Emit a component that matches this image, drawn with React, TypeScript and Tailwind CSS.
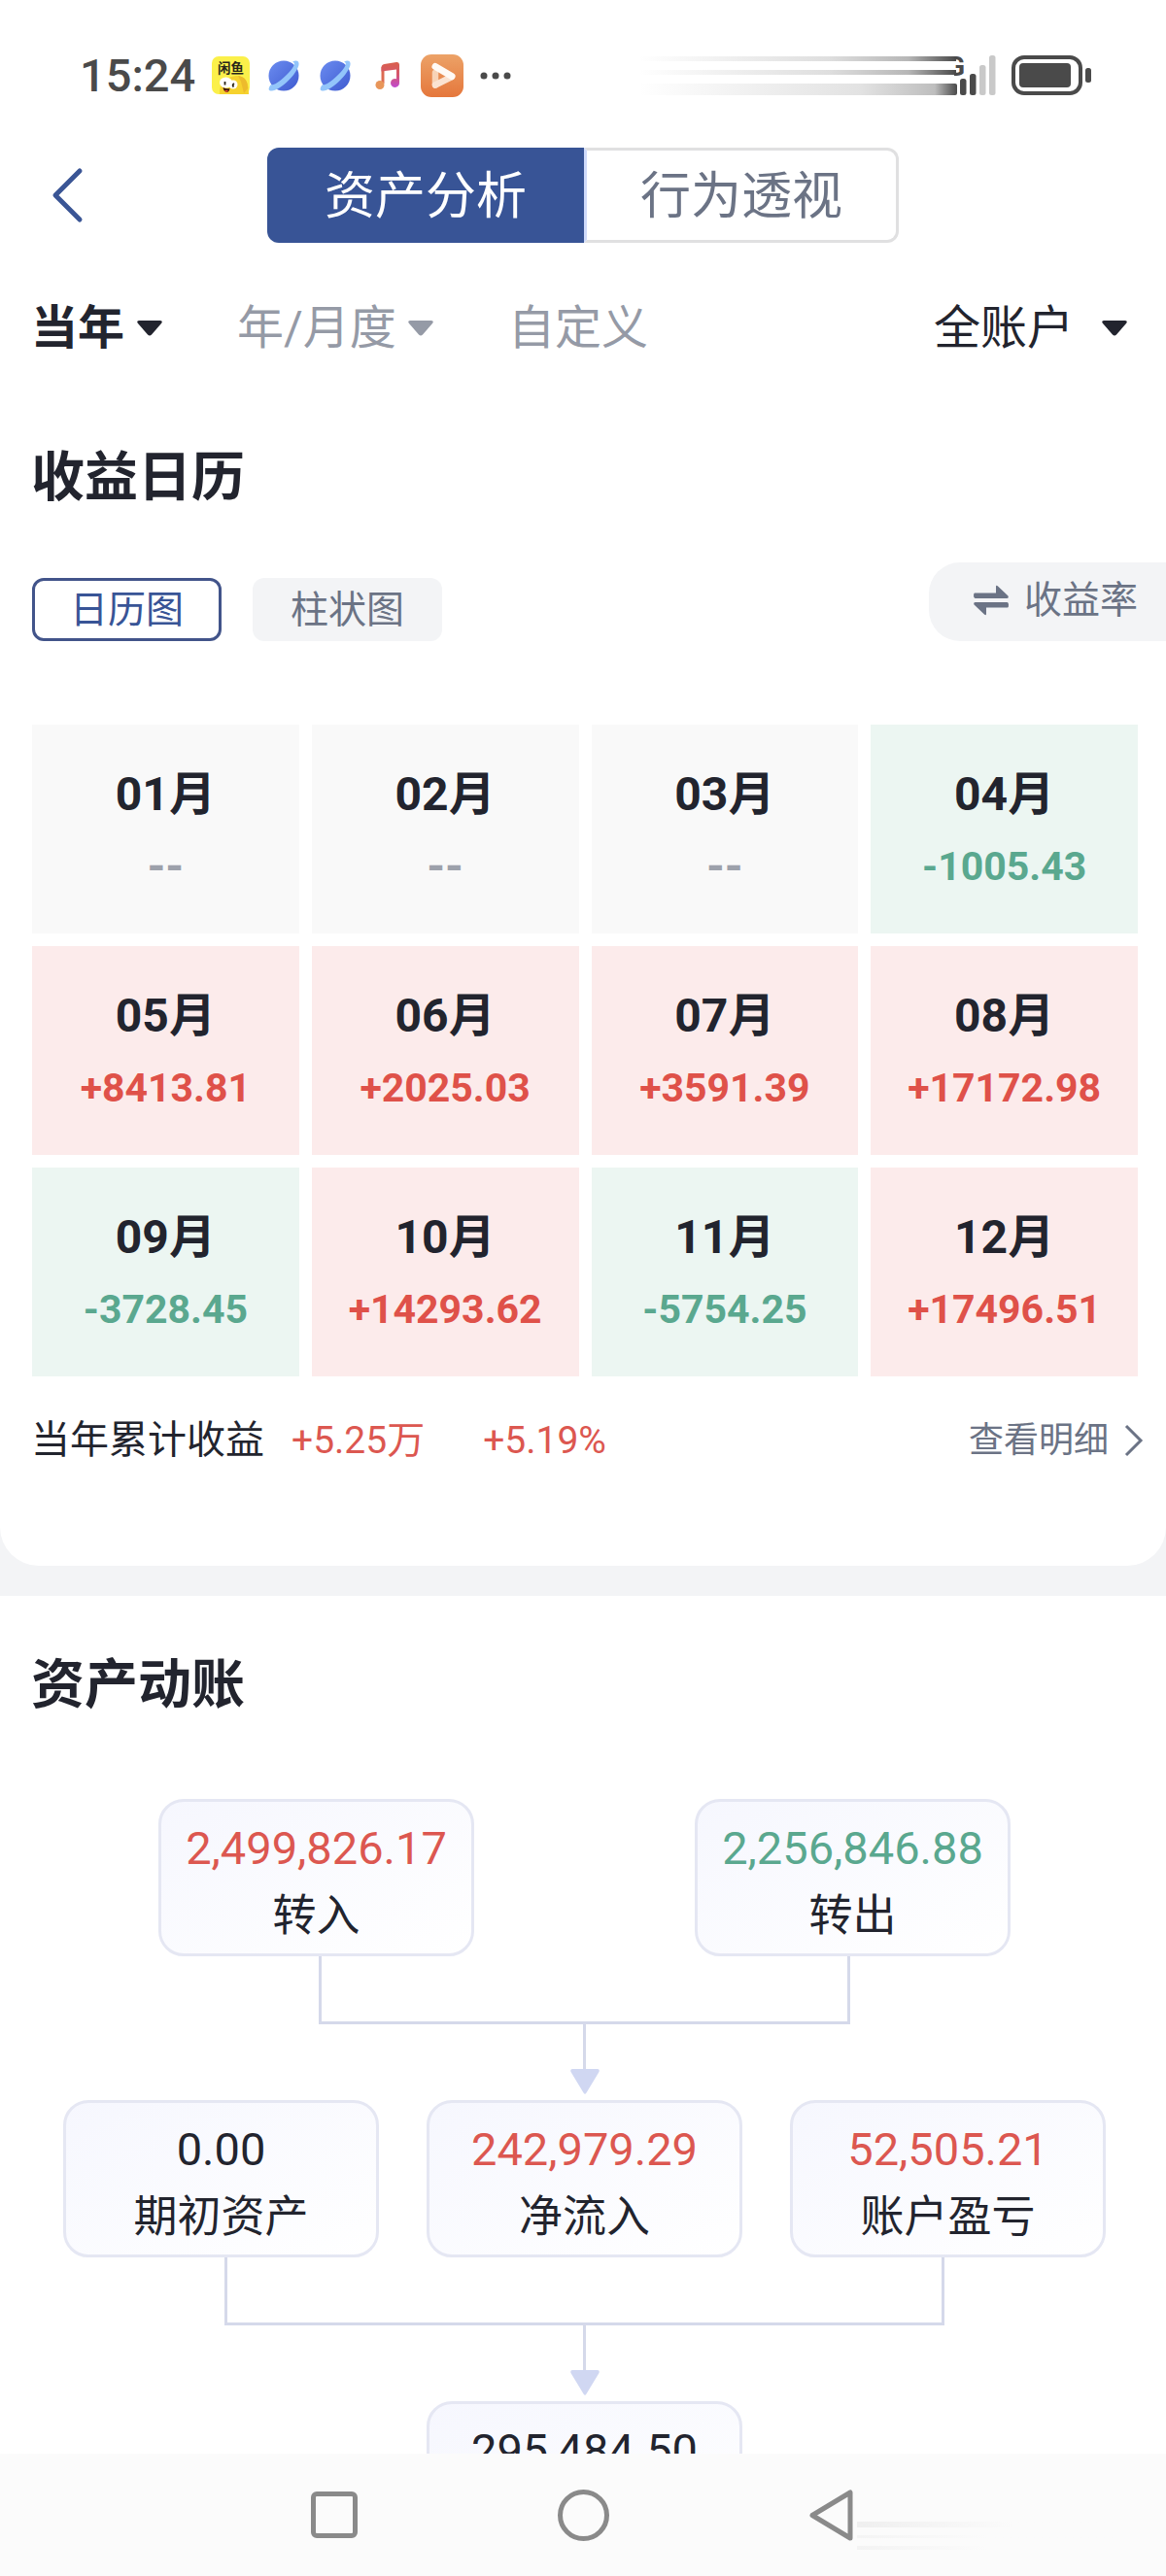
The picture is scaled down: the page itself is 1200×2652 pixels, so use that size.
import { useState } from 'react';
import clsx from 'clsx';

type Month = { label: string; value: string };

const MONTHS: Month[] = [
  { label: '01', value: '--' },
  { label: '02', value: '--' },
  { label: '03', value: '--' },
  { label: '04', value: '-1005.43' },
  { label: '05', value: '+8413.81' },
  { label: '06', value: '+2025.03' },
  { label: '07', value: '+3591.39' },
  { label: '08', value: '+17172.98' },
  { label: '09', value: '-3728.45' },
  { label: '10', value: '+14293.62' },
  { label: '11', value: '-5754.25' },
  { label: '12', value: '+17496.51' },
];

const VIEWS = ['日历图', '柱状图'];

const PlanetIcon = () => (
  <svg viewBox="0 0 36 36" className="size-9" aria-hidden="true">
    <defs>
      <linearGradient id="planet" x1="0" y1="0" x2="1" y2="1">
        <stop offset="0" stopColor="#6b8cf0" />
        <stop offset="1" stopColor="#3f5bd0" />
      </linearGradient>
    </defs>
    <circle cx="18" cy="18" r="15.5" fill="url(#planet)" />
    <path
      d="M5 27C1.500 31 2 34 6 33.500C12 32.500 20 26.500 26 19.500C32 12.500 35.500 5.500 32.500 3C31 2 29 2.500 27 3.800C29.500 4.200 29.500 6.500 27 10C23.500 15 17 21.500 11 25.200C8 27 5.800 27.800 5 27Z"
      fill="#93c5fa"
    />
  </svg>
);

const MusicIcon = () => (
  <svg viewBox="0 0 36 36" className="size-9" aria-hidden="true">
    <defs>
      <linearGradient id="note" x1="0" y1="0" x2="0" y2="1">
        <stop offset="0" stopColor="#d9604c" />
        <stop offset="0.5" stopColor="#d5566e" />
        <stop offset="1" stopColor="#c04ad0" />
      </linearGradient>
    </defs>
    <path d="M14 9V26" stroke="#dd6a52" strokeWidth="3" />
    <circle cx="11" cy="27.500" r="4.500" fill="#e8965a" />
    <path
      d="M12.500 9.500Q12.500 6.500 15.500 6L28 4Q31 3.600 31 6.500V25A4.500 4.500 0 1 1 28 21.200V11.500L12.500 13.500Z"
      fill="url(#note)"
    />
  </svg>
);

const XianyuIcon = () => (
  <svg viewBox="0 0 39 39" className="size-[39px]" aria-label="闲鱼">
    <rect width="39" height="39" rx="7" fill="#fbf04a" />
    <path d="M8 39C7 28 15 21 25 20C34 20 38 26 38 39Z" fill="#f6d22e" />
    <path d="M27 20Q37 21 37 33L33 38L30 26Z" fill="#edbb2c" />
    <ellipse cx="14.500" cy="27" rx="6.500" ry="5.500" fill="#fff" />
    <ellipse cx="22" cy="29" rx="4.500" ry="4.500" fill="#fff" />
    <path d="M13.500 26V29.500M23 28Q20.500 29.500 22.500 31.500" stroke="#2b2416" strokeWidth="1.800" fill="none" />
    <path d="M11.500 32Q15 34 18.500 33Q18 37 15 37Q12 36 11.500 32Z" fill="#3a1510" />
    <path d="M13 35.500Q15 34 17 35.500L15 37Z" fill="#e5492d" />
    <text x="6" y="17" fontSize="13.500" fontWeight="700" fill="#28261a">
      闲鱼
    </text>
  </svg>
);

const VideoIcon = () => (
  <svg viewBox="0 0 44 44" className="size-11" aria-hidden="true">
    <defs>
      <linearGradient id="video" x1="0" y1="0" x2="0" y2="1">
        <stop offset="0" stopColor="#eca267" />
        <stop offset="1" stopColor="#e5773c" />
      </linearGradient>
    </defs>
    <rect width="44" height="44" rx="11" fill="url(#video)" />
    <path d="M15 19V31.500" stroke="#f8d3b6" strokeWidth="6.500" strokeLinecap="round" />
    <path d="M15 31.500L32 23" stroke="#fbe3d1" strokeWidth="6.500" strokeLinecap="round" />
    <path d="M15 12.500L32 22.500" stroke="#fffaf5" strokeWidth="7" strokeLinecap="round" />
  </svg>
);

/* Signal and battery, with the network labels trailing off to the left */
const SystemIcons = () => (
  <svg viewBox="0 0 466 44" className="h-11 w-[466px]" aria-hidden="true">
    <defs>
      <linearGradient id="trail" x1="0" y1="0" x2="1" y2="0">
        <stop offset="0" stopColor="#4a4a4a" stopOpacity="0" />
        <stop offset="0.600" stopColor="#4a4a4a" stopOpacity="0.180" />
        <stop offset="0.850" stopColor="#4a4a4a" stopOpacity="0.400" />
        <stop offset="1" stopColor="#4a4a4a" />
      </linearGradient>
      <linearGradient id="trailWide" x1="0" y1="0" x2="1" y2="0">
        <stop offset="0" stopColor="#4a4a4a" stopOpacity="0" />
        <stop offset="0.700" stopColor="#4a4a4a" stopOpacity="0.160" />
        <stop offset="0.930" stopColor="#4a4a4a" stopOpacity="0.360" />
        <stop offset="1" stopColor="#4a4a4a" />
      </linearGradient>
      <clipPath id="halfG">
        <rect x="325" y="0" width="14" height="26" />
      </clipPath>
    </defs>
    <rect x="0" y="2" width="327" height="5" fill="url(#trail)" />
    <rect x="0" y="16" width="327" height="5" fill="url(#trail)" />
    <rect x="0" y="30" width="328" height="12" rx="2" fill="url(#trailWide)" />
    <text x="317" y="22" fontSize="28" fontWeight="700" fill="#4a4a4a" clipPath="url(#halfG)">
      G
    </text>
    <g fill="#4a4a4a">
      <rect x="331" y="25" width="6.500" height="17" rx="2.500" />
      <rect x="341" y="20" width="6.500" height="22" rx="2.500" />
    </g>
    <g fill="#c9c9c9">
      <rect x="351" y="11" width="6.500" height="31" rx="2.500" />
      <rect x="361" y="1" width="6.500" height="41" rx="2.500" />
    </g>
    <rect x="386" y="3" width="69" height="37" rx="11" fill="none" stroke="#4a4a4a" strokeWidth="4" />
    <rect x="392" y="9" width="53" height="25" rx="4" fill="#4a4a4a" />
    <rect x="460" y="14" width="6" height="15" rx="2.500" fill="#4a4a4a" />
  </svg>
);

const StatusBar = () => (
  <div className="flex h-[152px] shrink-0 items-center justify-between pt-[3px] pr-[77px] pl-[82px] text-[#4a4a4a]">
    <div className="flex items-center gap-[17px]">
      <span className="text-[47px] leading-[56px] font-medium">15:24</span>
      <XianyuIcon />
      <PlanetIcon />
      <PlanetIcon />
      <MusicIcon />
      <VideoIcon />
      <svg viewBox="0 0 32 8" className="h-2 w-8" fill="currentColor" aria-hidden="true">
        <circle cx="4" cy="4" r="3.500" />
        <circle cx="16" cy="4" r="3.500" />
        <circle cx="28" cy="4" r="3.500" />
      </svg>
    </div>
    <SystemIcons />
  </div>
);

const Header = () => (
  <header className="grid grid-cols-[1fr_auto_1fr] items-center">
    <button type="button" aria-label="返回" className="ml-[50px] w-10">
      <svg viewBox="0 0 40 60" className="h-[60px] w-10" fill="none" stroke="#3a5595" strokeWidth="5" strokeLinecap="round" strokeLinejoin="round">
        <path d="M32 5L7 30L32 55" />
      </svg>
    </button>
    <div role="tablist" className="flex h-[98px] text-[52px] leading-[60px]">
      <button type="button" role="tab" aria-selected="true" className="w-[326px] rounded-l-xl bg-[#385496] pt-1 text-white">
        资产分析
      </button>
      <button
        type="button"
        role="tab"
        aria-selected="false"
        className="w-[324px] rounded-r-xl border-[3px] border-l-[#cfdafa] border-[#e0e0e1] pt-1 text-[#6b7385]"
      >
        行为透视
      </button>
    </div>
  </header>
);

type DropdownProps = { label: string; name: string; className?: string; selectClassName?: string };

const Dropdown = ({ label, name, className, selectClassName }: DropdownProps) => (
  <label className={clsx('flex items-center', className)}>
    <select aria-label={name} className={clsx('appearance-none bg-transparent leading-[64px] outline-none', selectClassName)}>
      <option>{label}</option>
    </select>
    <svg viewBox="0 0 26 16" className="h-4 w-[26px]" fill="currentColor" aria-hidden="true">
      <path d="M2 0H24Q27 0.500 25 3L15 14.500Q13 16.500 11 14.500L1 3Q-1 0.500 2 0Z" />
    </svg>
  </label>
);

const Filters = () => (
  <div className="mt-10 flex h-24 items-center gap-[77px] pr-10 pl-8 text-[48px]">
    <Dropdown label="当年" name="年份" className="gap-3 text-[#22242e]" selectClassName="font-bold" />
    <Dropdown label="年/月度" name="年/月度" className="gap-3 text-[#959aa6]" />
    <button type="button" className="text-[#959aa6]">
      自定义
    </button>
    <Dropdown label="全账户" name="账户" className="ml-auto gap-7 text-[#22242e]" />
  </div>
);

const MonthCell = ({ label, value }: Month) => {
  const gain = value.startsWith('+');
  const empty = value === '--';

  return (
    <li
      className={clsx(
        'flex h-[215px] flex-col items-center pt-10',
        empty ? 'bg-[#f9f9f9]' : gain ? 'bg-[#fcebeb]' : 'bg-[#ecf6f2]',
      )}
    >
      <span className="text-[48px] leading-[64px] font-bold text-[#22242e]">{label}月</span>
      <span
        className={clsx(
          'mt-[10px] leading-[64px] font-bold',
          empty ? 'text-[48px] text-[#9da1ab]' : 'text-[41px]',
          !empty && (gain ? 'text-[#df5149]' : 'text-[#5aa88f]'),
        )}
      >
        {value}
      </span>
    </li>
  );
};

const IncomeCalendar = () => {
  const [view, setView] = useState(VIEWS[0]);

  return (
    <section>
      <h2 className="mt-[73px] pl-8 text-[55px] leading-[64px] font-bold text-[#22242e]">收益日历</h2>

      <div className="mt-14 flex items-end pl-[33px] text-[39px] leading-[48px]">
        {VIEWS.map((item) => (
          <button
            key={item}
            type="button"
            onClick={() => setView(item)}
            className={clsx(
              'mr-8 h-[65px] w-[195px] rounded-xl',
              item === view ? 'border-[3px] border-[#42548a] text-[#385496]' : 'bg-[#f3f4f6] text-[#6b7385]',
            )}
          >
            {item}
          </button>
        ))}
        <button type="button" className="ml-auto flex h-[81px] items-center gap-4 rounded-l-[32px] bg-[#f3f4f6] pr-[29px] pb-1 pl-[46px] text-[#6b7385]">
          <svg viewBox="0 0 36 32" className="h-8 w-9" fill="currentColor" aria-hidden="true">
            <path d="M1 8.500H23V2Q23 0 25 1.500L35.500 11.500Q36.500 14 34 14H1.500Q0 14 0 11.250Q0 8.500 1 8.500Z" />
            <path d="M35 23.500H13V30Q13 32 11 30.500L0.500 20.500Q-0.500 18 2 18H34.500Q36 18 36 20.750Q36 23.500 35 23.500Z" />
          </svg>
          收益率
        </button>
      </div>

      <ul className="mt-[86px] grid grid-cols-4 gap-[13px] pr-[29px] pl-[33px]">
        {MONTHS.map((month) => (
          <MonthCell key={month.label} {...month} />
        ))}
      </ul>

      <div className="mt-[38px] flex h-14 items-center pr-[23px] pl-8 text-[39px]">
        <span className="text-[40px] text-[#22242e]">当年累计收益</span>
        <span className="ml-7 text-[#dc5750]">+5.25万</span>
        <span className="ml-[60px] text-[#dc5750]">+5.19%</span>
        <a href="#detail" className="ml-auto flex items-center gap-4 text-[36px] text-[#6b7385]">
          查看明细
          <svg viewBox="0 0 20 34" className="h-[34px] w-5" fill="none" stroke="currentColor" strokeWidth="3" aria-hidden="true">
            <path d="M2 2L17 17L2 32" />
          </svg>
        </a>
      </div>
    </section>
  );
};

type NodeProps = { amount: string; title?: string; color?: string };

const FlowNode = ({ amount, title, color = 'text-[#22242e]' }: NodeProps) => (
  <div className="flex h-[162px] w-[325px] flex-col items-center rounded-[26px] border-[3px] border-[#e5e7f3] bg-linear-to-br from-[#f6f7fe] to-white pt-[13px] leading-[70px]">
    <span className={clsx('text-[47px]', color)}>{amount}</span>
    {title && <span className="text-[45px] text-[#22242e]">{title}</span>}
  </div>
);

const Connector = ({ className }: { className: string }) => (
  <div className="flex h-[148px] flex-col items-center">
    <div className={clsx('h-[70px] border-[3px] border-t-0 border-[#d5d9ea]', className)} />
    <div className="h-[46px] w-[3px] bg-[#d5d9ea]" />
    <svg viewBox="0 0 30 26" className="h-[26px] w-[30px]" fill="#d0d7f2" aria-hidden="true">
      <path d="M2 0H28Q30.500 0.500 29.500 3L16.500 24.500Q15 27 13.500 24.500L0.500 3Q-0.500 0.500 2 0Z" />
    </svg>
  </div>
);

const AssetFlow = () => (
  <section className="bg-white pt-[59px]">
    <h2 className="pl-8 text-[55px] leading-[64px] font-bold text-[#22242e]">资产动账</h2>

    <div className="mt-[86px] pl-[3px]">
      <div className="flex justify-between px-40">
        <FlowNode amount="2,499,826.17" title="转入" color="text-[#dc5750]" />
        <FlowNode amount="2,256,846.88" title="转出" color="text-[#5aa88f]" />
      </div>
      <Connector className="w-[547px]" />
      <div className="flex justify-between px-[62px]">
        <FlowNode amount="0.00" title="期初资产" />
        <FlowNode amount="242,979.29" title="净流入" color="text-[#dc5750]" />
        <FlowNode amount="52,505.21" title="账户盈亏" color="text-[#dc5750]" />
      </div>
      <Connector className="w-[741px]" />
      <div className="flex justify-center">
        <FlowNode amount="295,484.50" />
      </div>
    </div>
  </section>
);

const NavBar = () => (
  <nav className="relative flex h-[126px] shrink-0 justify-center bg-[#fbfbfb] text-[#8a8a8a]">
    <div className="grid w-[64%] grid-cols-3 place-items-center">
      <button type="button" aria-label="最近任务" className="size-12 rounded-md border-[5px] border-current" />
      <button type="button" aria-label="主页" className="size-[53px] rounded-full border-[5px] border-current" />
      <button type="button" aria-label="返回上一页">
        <svg viewBox="0 0 46 53" className="h-[53px] w-[46px]" fill="none" stroke="currentColor" strokeWidth="5" strokeLinejoin="round">
          <path d="M42 3V50L3 26.500Z" />
        </svg>
      </button>
    </div>
    {/* faint streaks beside the back key */}
    <div className="absolute top-[70px] right-[50px] flex w-[268px] flex-col gap-2">
      <div className="h-[6px] bg-linear-to-r from-[#efefef] to-[#fbfbfb] to-60%" />
      <div className="h-[3px] bg-linear-to-r from-[#f4f4f4] to-[#fbfbfb] to-50%" />
      <div className="h-[4px] bg-linear-to-r from-[#f3f3f3] to-[#fbfbfb] to-50%" />
    </div>
  </nav>
);

const App = () => {
  return (
    <div className="flex h-screen flex-col bg-white font-['Roboto','Noto_Sans_CJK_SC',sans-serif]">
      <main className="min-h-0 flex-1 overflow-y-auto bg-[#f3f4f6] [scrollbar-width:none]">
        <div className="mb-[31px] rounded-b-[40px] bg-white pb-[101px]">
          <StatusBar />
          <Header />
          <Filters />
          <IncomeCalendar />
        </div>
        <AssetFlow />
      </main>
      <NavBar />
    </div>
  );
};

export default App;
